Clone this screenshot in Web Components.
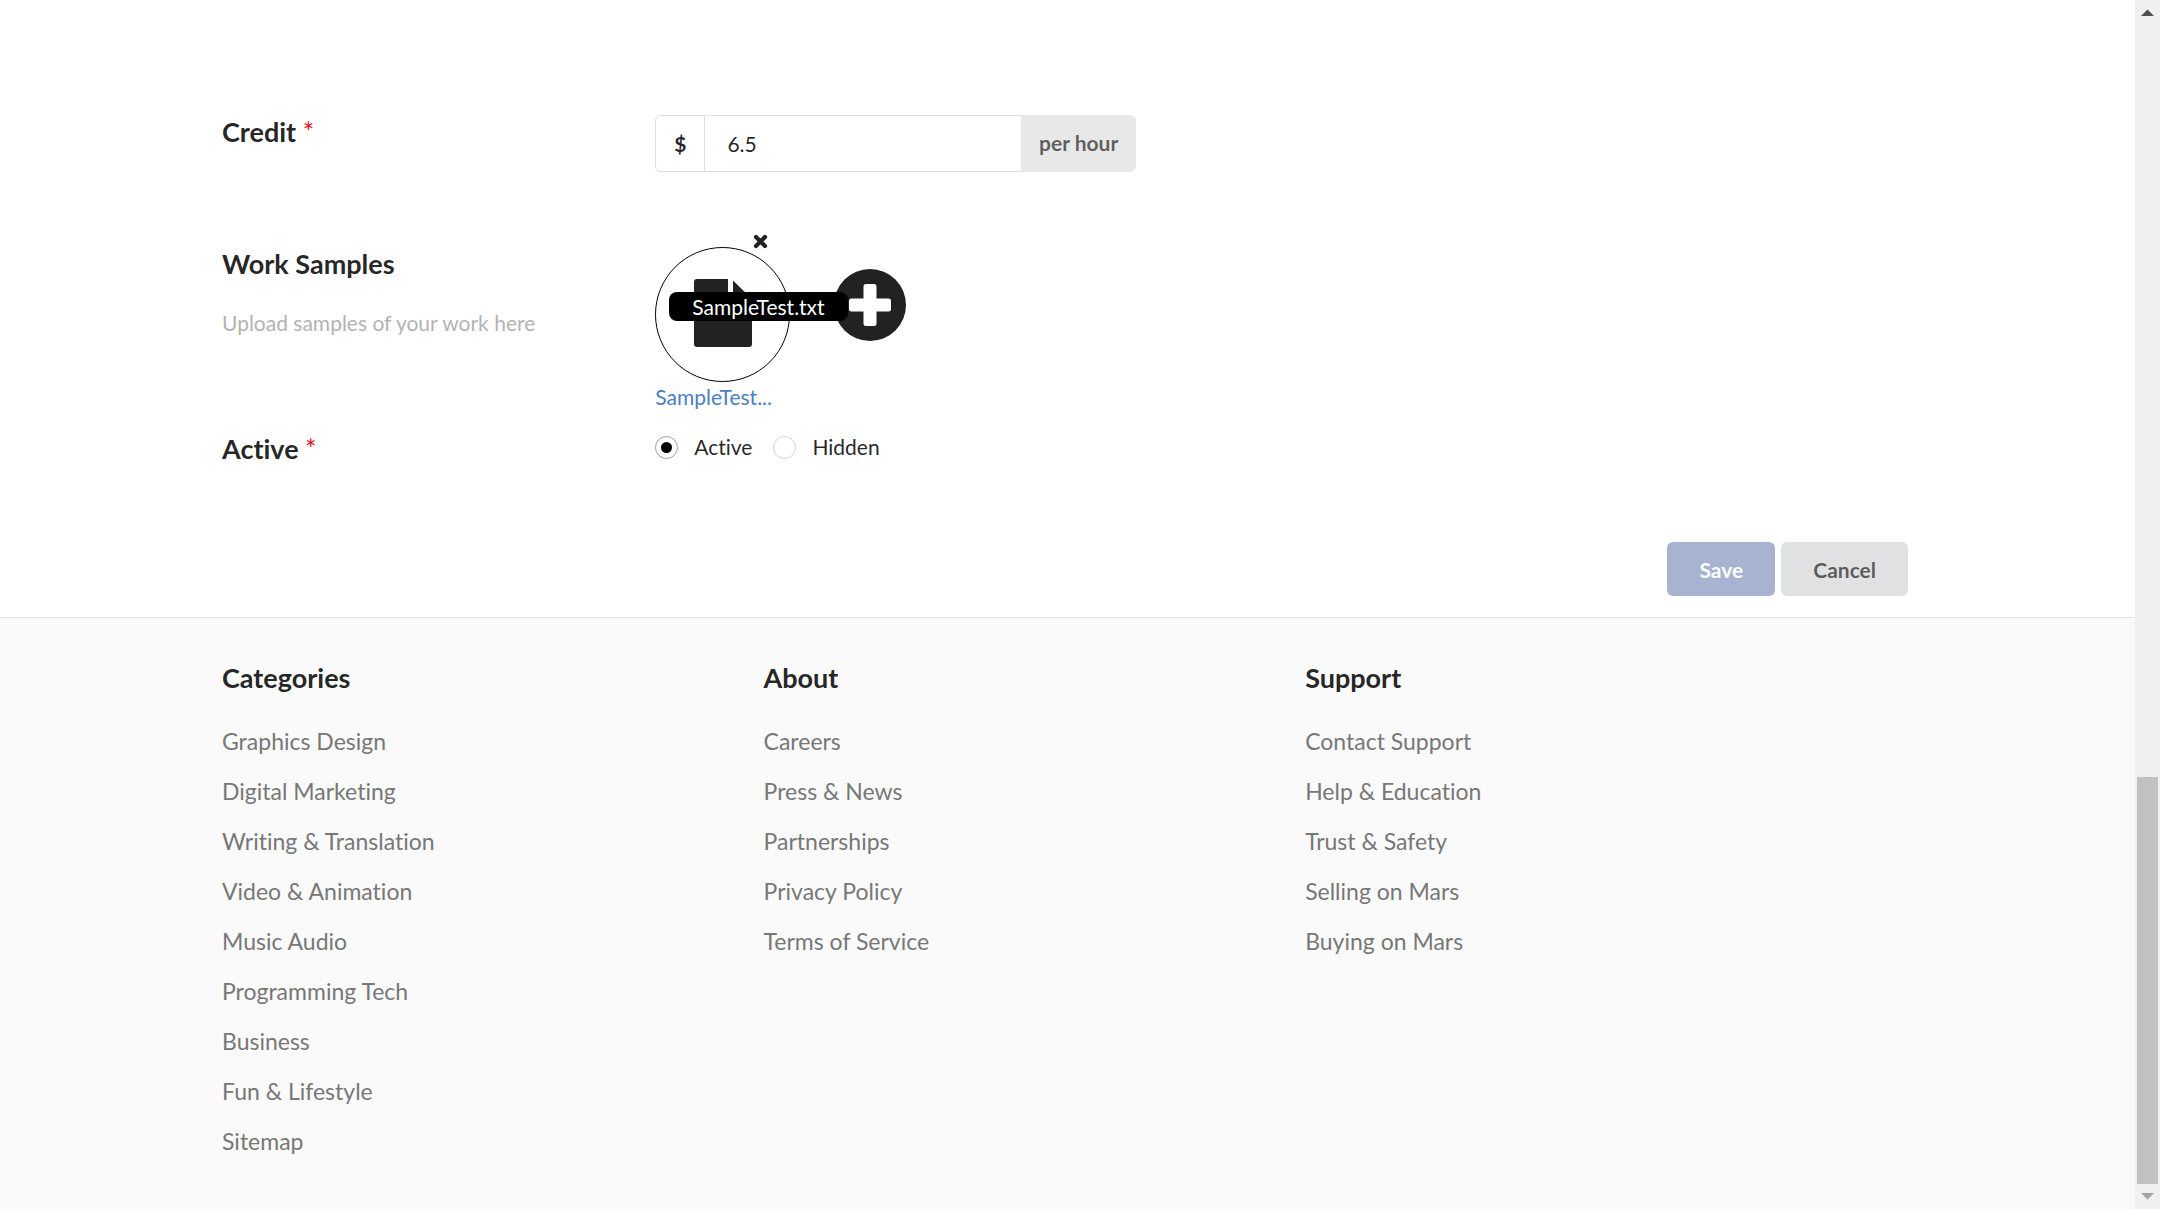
<!DOCTYPE html>
<html lang="en">
<head>
<meta charset="utf-8">
<title>Share Skill</title>
<style>
  html, body { margin: 0; height: 100%; }
  body { font-family: Lato, "Liberation Sans", sans-serif; font-size: 21px; line-height: 32px; font-variant-ligatures: none; color: rgba(0,0,0,.87); background: #fff; }
</style>
</head>
<body>
<page-shell>
  <skill-form></skill-form>
  <site-footer></site-footer>
</page-shell>

<template id="t-page-shell">
  <style>
    :host { display: flex; height: 100vh; overflow: hidden; }
    main { flex: 1; min-width: 0; display: flex; flex-direction: column; }
  </style>
  <main><slot></slot></main>
  <scroll-rail></scroll-rail>
</template>

<template id="t-scroll-rail">
  <style>
    :host { display: flex; flex-direction: column; width: 25px; background: #f0f0f0; }
    svg { display: block; width: 25px; height: 25px; flex: none; }
    .before { flex: 752; }
    .thumb { flex: 407; margin: 0 2px; background: #c1c1c1; }
  </style>
  <svg viewBox="0 0 25 25" aria-hidden="true"><path d="M6 16L12.500 9.500L19 16z" fill="#505050"/></svg>
  <div class="before"></div>
  <div class="thumb"></div>
  <svg viewBox="0 0 25 25" aria-hidden="true"><path d="M6 9L12.500 15.500L19 9z" fill="#a3a3a3"/></svg>
</template>

<template id="t-field-row">
  <style>
    :host { display: grid; grid-template-columns: 4fr 12fr; }
    div { padding: 0 21px; }
    ::slotted(h3) { margin: 0; font-size: 27px; line-height: 34px; font-weight: 700; }
    ::slotted(p) { margin: 26px 0 0; color: #b3b3b3; }
  </style>
  <div><slot name="label"></slot></div>
  <div><slot></slot></div>
</template>

<template id="t-labeled-input">
  <style>
    :host { display: flex; width: 481px; height: 57px; }
    span { display: flex; align-items: center; box-sizing: border-box; font-weight: 700; }
    .unit { padding: 0 18px; border: 1px solid #dededf; border-radius: 6px 0 0 6px; }
    .suffix { padding: 0 18px 2px; background: #e8e8e8; color: rgba(0,0,0,.6); border-radius: 0 6px 6px 0; }
    ::slotted(input) { flex: 1; min-width: 0; box-sizing: border-box; margin: 0; padding: 0 22px; border: solid #dededf; border-width: 1px 0; font: inherit; color: inherit; background: #fff; outline: 0; }
  </style>
  <span class="unit"><slot name="unit"></slot></span>
  <slot></slot>
  <span class="suffix"><slot name="suffix"></slot></span>
</template>

<template id="t-sample-file">
  <style>
    :host { display: block; position: relative; width: 135px; }
    .disc { display: flex; align-items: center; justify-content: center; box-sizing: border-box; width: 135px; height: 135px; padding-bottom: 4px; border: 1px solid #000; border-radius: 50%; }
    .disc svg { display: block; width: 58px; height: 68px; }
    a { display: block; line-height: 30px; color: #4a7fc0; text-decoration: none; }
    button { position: absolute; top: -13px; left: 98px; width: 15px; height: 15px; padding: 0; border: 0; background: none; }
    button svg { display: block; }
    .tip { position: absolute; z-index: 1; top: 45px; left: 14px; padding: 0 23px; border-radius: 8px; background: #000; color: #fff; line-height: 29px; white-space: nowrap; }
  </style>
  <button type="button" aria-label="Remove file">
    <svg width="15" height="15" viewBox="0 0 15 15"><path d="M3 3L12 12M12 3L3 12" stroke="#222" stroke-width="4.200" stroke-linecap="round"/></svg>
  </button>
  <div class="disc">
    <svg viewBox="0 0 58 68" fill="#222" aria-hidden="true"><path d="M34 0V20a4 4 0 0 0 4 4H58V65a3 3 0 0 1-3 3H3a3 3 0 0 1-3-3V3a3 3 0 0 1 3-3zM39 1.500L57 19H39z"/></svg>
  </div>
  <a href="#sample"></a>
  <span class="tip" role="tooltip"></span>
</template>

<template id="t-skill-form">
  <style>
    :host { display: block; padding: 115px 21px 21px; }
    form { display: flex; flex-direction: column; max-width: 1733px; margin: 0 auto; }
    .star { color: #e8101c; font-weight: 400; }
    .samples { margin-top: 75px; }
    .active { margin-top: 20px; }
    .files { display: flex; align-items: flex-start; gap: 44px; }
    .add { width: 72px; height: 72px; margin-top: 22px; padding: 0; border: 0; background: none; }
    .add svg { display: block; }
    .radios { display: flex; gap: 21px; line-height: 30px; }
    .radios label { display: flex; align-items: center; gap: 16px; }
    .radios input { appearance: none; display: grid; place-items: center; box-sizing: border-box; width: 23px; height: 23px; margin: 0; border: 1px solid #d4d4d5; border-radius: 50%; background: #fff; }
    .radios input:checked { border-color: #a0a0a0; }
    .radios input:checked::before { content: ""; width: 11px; height: 11px; border-radius: 50%; background: #000; }
    .actions { display: flex; justify-content: flex-end; gap: 6px; margin-top: 76px; padding: 0 26px; }
    .actions button { height: 54px; padding: 1px 32px 0; border: 0; border-radius: 6px; font: inherit; font-weight: 700; background: #e0e1e2; color: rgba(0,0,0,.6); }
    .actions .save { background: #a7b3d0; color: #fff; }
  </style>
  <form>
    <field-row>
      <h3 slot="label"><label for="credit">Credit</label> <span class="star">*</span></h3>
      <labeled-input><span slot="unit">$</span><input id="credit" type="text" value="6.5"><span slot="suffix">per hour</span></labeled-input>
    </field-row>
    <field-row class="samples">
      <h3 slot="label">Work Samples</h3>
      <p slot="label">Upload samples of your work here</p>
      <div class="files">
        <sample-file name="SampleTest.txt" short="SampleTest..."></sample-file>
        <button class="add" type="button" aria-label="Add work sample">
          <svg width="72" height="72" viewBox="0 0 72 72"><circle cx="36" cy="36" r="36" fill="#222"/><path d="M32 15h8q2.500 0 2.500 2.500v12h12q2.500 0 2.500 2.500v8q0 2.500-2.500 2.500h-12v12q0 2.500-2.500 2.500h-8q-2.500 0-2.500-2.500v-12h-12q-2.500 0-2.500-2.500v-8q0-2.500 2.500-2.500h12v-12q0-2.500 2.500-2.500z" fill="#fff"/></svg>
        </button>
      </div>
    </field-row>
    <field-row class="active">
      <h3 slot="label"><span id="active-title">Active</span> <span class="star">*</span></h3>
      <div class="radios" role="radiogroup" aria-labelledby="active-title">
        <label><input type="radio" name="active" checked>Active</label>
        <label><input type="radio" name="active">Hidden</label>
      </div>
    </field-row>
    <div class="actions">
      <button class="save" type="button">Save</button>
      <button type="button">Cancel</button>
    </div>
  </form>
</template>

<template id="t-link-column">
  <style>
    :host { display: block; padding: 0 21px; }
    ::slotted(h3) { margin: 0 0 21px; font-size: 27px; line-height: 34px; font-weight: 700; }
    ::slotted(a) { display: block; font-size: 23px; line-height: 50px; color: #777; text-decoration: none; }
  </style>
  <slot></slot>
</template>

<template id="t-site-footer">
  <style>
    :host { display: block; flex: 1; padding: 43px 21px 0; border-top: 1px solid #e2e3e4; background: #fafafa; }
    nav { display: grid; grid-template-columns: 5fr 5fr 6fr; max-width: 1733px; margin: 0 auto; }
  </style>
  <nav>
    <link-column>
      <h3>Categories</h3>
      <a href="#">Graphics Design</a><a href="#">Digital Marketing</a><a href="#">Writing &amp; Translation</a><a href="#">Video &amp; Animation</a><a href="#">Music Audio</a><a href="#">Programming Tech</a><a href="#">Business</a><a href="#">Fun &amp; Lifestyle</a><a href="#">Sitemap</a>
    </link-column>
    <link-column>
      <h3>About</h3>
      <a href="#">Careers</a><a href="#">Press &amp; News</a><a href="#">Partnerships</a><a href="#">Privacy Policy</a><a href="#">Terms of Service</a>
    </link-column>
    <link-column>
      <h3>Support</h3>
      <a href="#">Contact Support</a><a href="#">Help &amp; Education</a><a href="#">Trust &amp; Safety</a><a href="#">Selling on Mars</a><a href="#">Buying on Mars</a>
    </link-column>
  </nav>
</template>

<script>
  class TemplateElement extends HTMLElement {
    constructor() {
      super();
      const template = document.getElementById('t-' + this.localName);
      this.attachShadow({ mode: 'open' }).append(document.importNode(template.content, true));
    }
  }
  class ScrollRail extends TemplateElement {}
  class FieldRow extends TemplateElement {}
  class LabeledInput extends TemplateElement {}
  class SampleFile extends TemplateElement {
    connectedCallback() {
      this.shadowRoot.querySelector('a').textContent = this.getAttribute('short');
      this.shadowRoot.querySelector('.tip').textContent = this.getAttribute('name');
    }
  }
  class SkillForm extends TemplateElement {}
  class LinkColumn extends TemplateElement {}
  class SiteFooter extends TemplateElement {}
  class PageShell extends TemplateElement {}
  customElements.define('scroll-rail', ScrollRail);
  customElements.define('field-row', FieldRow);
  customElements.define('labeled-input', LabeledInput);
  customElements.define('sample-file', SampleFile);
  customElements.define('skill-form', SkillForm);
  customElements.define('link-column', LinkColumn);
  customElements.define('site-footer', SiteFooter);
  customElements.define('page-shell', PageShell);
</script>
</body>
</html>
